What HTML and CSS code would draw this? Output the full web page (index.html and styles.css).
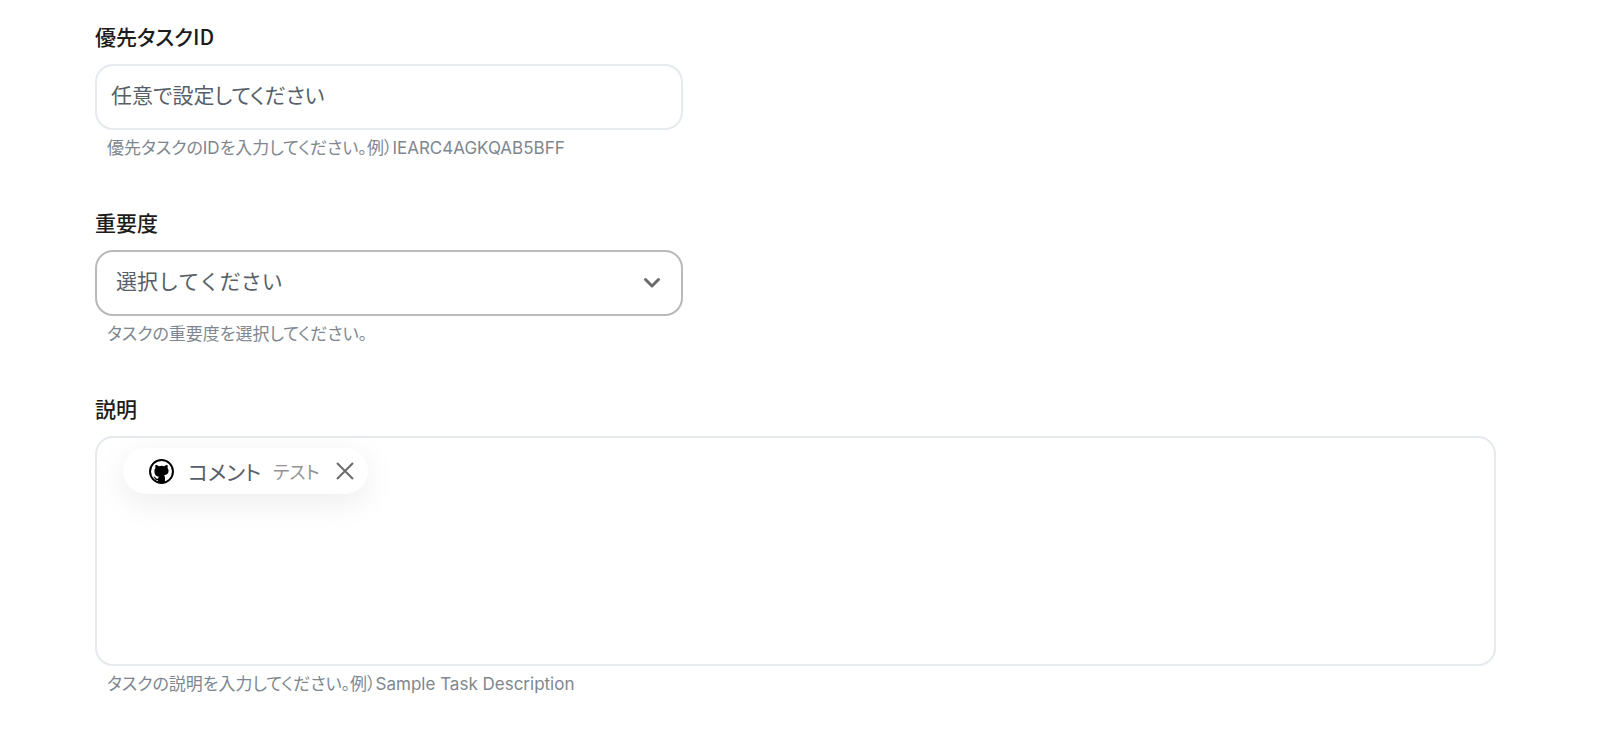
FILE: index.html
```
<!doctype html>
<html lang="ja">
<head>
	<meta charset="utf-8">
	<meta name="viewport" content="width=device-width, initial-scale=1">
	<title>タスク設定</title>
	<link rel="stylesheet" href="styles.css">
</head>

<body>
	<form class="task-form">
		<div class="field">
			<label class="label" for="taskId">優先タスクID</label>
			<input class="control" id="taskId" type="text" placeholder="任意で設定してください" aria-describedby="taskIdHelp">
			<p class="help" id="taskIdHelp">優先タスクのIDを入力してください。例）IEARC4AGKQAB5BFF</p>
		</div>

		<div class="field">
			<label class="label" for="importance">重要度</label>
			<div class="select-wrap">
				<select class="control select" id="importance" aria-describedby="importanceHelp">
					<option>選択してください</option>
				</select>
				<svg class="chevron" viewBox="0 0 18 12" aria-hidden="true">
					<path d="M2.500 2.500L9 9l6.500-6.500"/>
				</svg>
			</div>
			<p class="help" id="importanceHelp">タスクの重要度を選択してください。</p>
		</div>

		<div class="field">
			<span class="label" id="descLabel">説明</span>
			<div class="editor" role="textbox" aria-multiline="true" tabindex="0" aria-labelledby="descLabel" aria-describedby="descHelp">
				<span class="chip">
					<svg class="chip-icon" viewBox="0 0 24 24" aria-hidden="true">
						<circle cx="12" cy="12" r="11" fill="#fff" stroke="#000" stroke-width="1.900"/>
						<path d="M6.300 5.800c1.200 0 2.300.5 3.100 1.100a11 11 0 0 1 5.200 0c.8-.6 1.900-1.100 3.100-1.100.4 1 .4 2 .1 2.800.7.800 1 1.600 1 2.700 0 2.800-1.700 4-4.400 4.300.6.600.9 1.200.9 2.100v5.100H8.700v-2.500c-2.200.3-2.700-.7-3.200-1.600-.3-.6-.6-.9-1-1.200-.4-.4 0-.7.4-.6.700.1 1.100.5 1.500 1.100.6.900 1.200 1.200 2.300.8.100-.8.400-1.300.9-1.800-2.800-.3-4.400-1.600-4.400-5.700 0-1.100.3-2 1-2.700-.3-.8-.3-1.800.1-2.800z"/>
					</svg>
					<span class="chip-name">コメント</span>
					<span class="chip-value">テスト</span>
					<button class="chip-remove" type="button" aria-label="削除">
						<svg viewBox="0 0 18 18" aria-hidden="true">
							<path d="M1 1l16 16M17 1L1 17"/>
						</svg>
					</button>
				</span>
			</div>
			<p class="help" id="descHelp">タスクの説明を入力してください。例）Sample Task Description</p>
		</div>
	</form>
</body>
</html>
```
FILE: styles.css
```
* {
	margin: 0;
	padding: 0;
	box-sizing: border-box;
}

body {
	background: #fff;
	color: #575e67;
	font-family: Inter, "Noto Sans CJK JP", sans-serif;
	font-size: 21px;
	font-feature-settings: "palt";
}

.task-form {
	display: flex;
	flex-direction: column;
	gap: 47px;
	padding: 21px 104px 24px 95px;
}

.field {
	display: flex;
	flex-direction: column;
}
.label {
	align-self: flex-start;
	margin-bottom: 13px;
	line-height: 30px;
	font-family: "Noto Sans CJK JP", sans-serif;
	font-weight: 500;
	color: #1c1c1c;
}
.help {
	margin-top: 6px;
	padding-left: 12px;
	font-size: 17px;
	line-height: 24px;
	color: #7e878f;
}

/* text box and drop-down */
.control {
	width: 42%;
	height: 66px;
	padding: 0 14px 4px;
	border: 2px solid #e6e9ee;
	border-radius: 18px;
	background: #fff;
	color: #575e67;
	font-family: inherit;
	font-size: 21px;
	font-feature-settings: inherit;
}
.control::placeholder {
	color: #575e67;
	opacity: 1;
}
.select-wrap {
	display: flex;
	align-items: center;
	width: 42%;
}
.select {
	width: 100%;
	padding: 0 56px 4px 19px;
	border-color: #b9b9b9;
	appearance: none;
	font-feature-settings: normal;
}
.chevron {
	width: 18px;
	height: 12px;
	margin-left: -40px;
	fill: none;
	stroke: #6b6b6b;
	stroke-width: 3;
	stroke-linecap: round;
	stroke-linejoin: round;
	pointer-events: none;
}

/* description editor */
.editor {
	min-height: 230px;
	padding: 10px 26px;
	border: 2px solid #e6e9ee;
	border-radius: 18px;
	overflow: hidden;
}
.chip {
	display: inline-flex;
	align-items: center;
	height: 46px;
	padding: 0 14px 0 26px;
	border-radius: 23px;
	background: #fff;
	box-shadow: 0 8px 32px rgba(0, 0, 0, 0.08);
}
.chip-icon {
	width: 25px;
	height: 25px;
	margin-right: 14px;
}
.chip-name {
	margin-right: 12px;
	font-size: 21px;
}
.chip-value {
	margin-right: 16px;
	font-size: 18px;
	color: #929292;
}
.chip-remove {
	width: 18px;
	height: 18px;
	border: 0;
	background: none;
	cursor: pointer;
}
.chip-remove svg {
	display: block;
	fill: none;
	stroke: #6b6b6b;
	stroke-width: 2;
}
```
